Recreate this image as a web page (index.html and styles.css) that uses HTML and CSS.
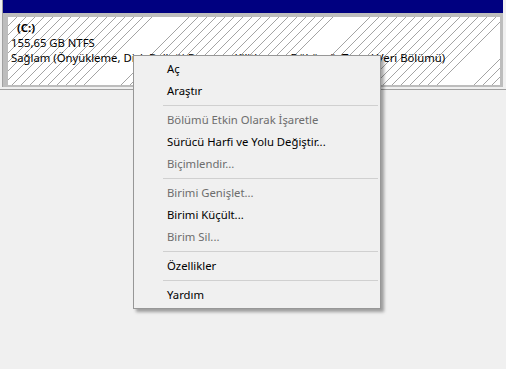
FILE: index.html
```html
<!DOCTYPE html>
<html lang="tr">
<head>
    <meta charset="UTF-8">
    <title>Disk Yönetimi</title>
    <link rel="stylesheet" href="styles.css">
</head>
<body>
    <!-- Volume view -->
    <div class="disk-pane">
        <div class="volume">
            <div class="volume-head"></div>
            <div class="volume-body">
                <div class="volume-name">(C:)</div>
                <div class="volume-line">155,65 GB NTFS</div>
                <div class="volume-line">Sağlam (Önyükleme, Disk Belleği Dosyası, Kilitlenme Dökümü, Temel Veri Bölümü)</div>
            </div>
        </div>
    </div>

    <!-- Context menu -->
    <ul class="context-menu">
        <li class="menu-item">Aç</li>
        <li class="menu-item">Araştır</li>
        <li class="menu-sep"></li>
        <li class="menu-item disabled">Bölümü Etkin Olarak İşaretle</li>
        <li class="menu-item">Sürücü Harfi ve Yolu Değiştir...</li>
        <li class="menu-item disabled">Biçimlendir...</li>
        <li class="menu-sep"></li>
        <li class="menu-item disabled">Birimi Genişlet...</li>
        <li class="menu-item">Birimi Küçült...</li>
        <li class="menu-item disabled">Birim Sil...</li>
        <li class="menu-sep"></li>
        <li class="menu-item">Özellikler</li>
        <li class="menu-sep"></li>
        <li class="menu-item">Yardım</li>
    </ul>
</body>
</html>
```

FILE: styles.css
```css
body {
    margin: 0;
    height: 369px;
    overflow: hidden;
    background: #f0f0f0;
    font-family: "Segoe UI", "Noto Sans", sans-serif;
    font-size: 11.3px;
    color: #000;
}

/* Volume view */
.disk-pane {
    padding: 0 3px 2px 2px;
    border-bottom: 1px solid #a0a0a0;
}

.volume {
    border-left: 1px solid #a0a0a0;
    background: #bdbdbd;
    padding-bottom: 2px;
}

.volume-head {
    height: 13px;
    background: #000080;
}

.volume-body {
    margin: 4px 3px 0 5px;
    height: 68px;
    box-sizing: border-box;
    padding: 3px 0 0 3px;
    background: repeating-linear-gradient(135deg, #fff 0 5.8px, #a4a4a4 5.8px 6.4px);
    line-height: 15px;
    white-space: nowrap;
    overflow: hidden;
}

.volume-name {
    font-weight: bold;
    padding-left: 6px;
}

/* Context menu */
.context-menu {
    position: absolute;
    left: 133px;
    top: 55px;
    width: 248px;
    box-sizing: border-box;
    margin: 0;
    padding: 2px 0;
    list-style: none;
    background: #f0f0f0;
    border: 1px solid #979797;
    box-shadow: 3px 3px 3px rgba(0, 0, 0, 0.35);
}

.menu-item {
    height: 22px;
    line-height: 22px;
    padding-left: 33px;
}

.menu-item.disabled {
    color: #6d6d6d;
}

.menu-sep {
    height: 1px;
    margin: 3px 2px 3px 29px;
    background: #d0d0d0;
}
```
